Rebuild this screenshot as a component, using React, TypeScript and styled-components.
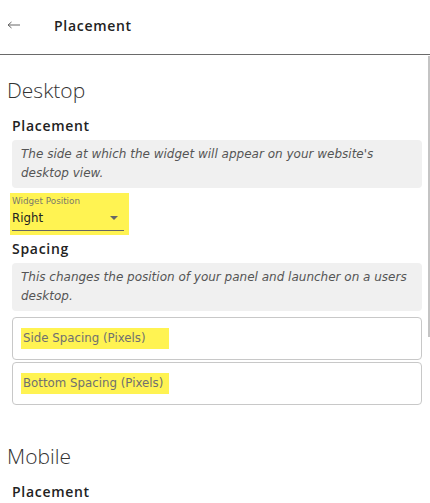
import React from "react";
import styled, { createGlobalStyle } from "styled-components";

const Global = createGlobalStyle`
  html, body { margin: 0; padding: 0; background: #fff; }
  body { font-family: "DejaVu Sans", "Open Sans", sans-serif; color: #333; }
  * { box-sizing: border-box; }
`;

const Page = styled.div`
  width: 430px;
  height: 503px;
  display: flex;
  flex-direction: column;
  overflow: hidden;
  background: #fff;
`;

const Header = styled.header`
  height: 55px;
  flex: none;
  display: flex;
  align-items: center;
  padding: 0 0 4px 7px;
  border-bottom: 1px solid #6a6a6a;
`;

const BackButton = styled.button`
  border: 0;
  background: none;
  padding: 0;
  width: 14px;
  height: 14px;
  display: flex;
  color: #666;
  margin-right: 33px;
`;

const HeaderTitle = styled.h1`
  margin: 0;
  font-family: "Open Sans", sans-serif;
  font-size: 14px;
  font-weight: 600;
  color: #222;
  letter-spacing: 0.7px;
`;

const Body = styled.div`
  position: relative;
  flex: 1;
  min-height: 0;
  display: flex;
  flex-direction: column;
`;

const Scroller = styled.main`
  flex: 1;
  overflow-y: auto;
  scrollbar-width: none;
  padding: 21px 8px 0 0;
  &::-webkit-scrollbar { display: none; }
`;

const ScrollThumb = styled.div`
  position: absolute;
  top: 1px;
  right: 0;
  width: 2.5px;
  height: 281px;
  background: #c4c4c4;
`;

const Section = styled.section<{ $gap?: number }>`
  display: flex;
  flex-direction: column;
  margin-bottom: ${(p) => p.$gap ?? 0}px;
`;

const SectionTitle = styled.h2`
  margin: 0 0 11px 7px;
  font-family: "Open Sans", sans-serif;
  font-size: 21px;
  font-weight: 300;
  color: #333;
  line-height: 28px;
`;

const Group = styled.div`
  display: flex;
  flex-direction: column;
  padding-left: 12px;
`;

const GroupTitle = styled.h3<{ $top?: number }>`
  margin: ${(p) => p.$top ?? 0}px 0 4px;
  font-family: "Open Sans", sans-serif;
  font-size: 14px;
  font-weight: 600;
  color: #222;
  line-height: 21px;
  letter-spacing: 0.7px;
`;

const Note = styled.p`
  margin: 0;
  height: 48px;
  background: #f0f0f0;
  border-radius: 4px;
  padding: 5px 5px 5px 9px;
  font-size: 12px;
  font-style: italic;
  line-height: 19px;
  color: #555;
`;

const Highlight = styled.span`
  background: #fff352;
`;

const SelectWrap = styled(Highlight)`
  display: block;
  width: 119px;
  margin: 5px 0 0 -2px;
  padding: 3px 5px 4px 2px;
`;

const SelectLabel = styled.span`
  display: block;
  font-size: 8.8px;
  line-height: 10px;
  color: #7a7a6a;
`;

const SelectRow = styled.span`
  display: flex;
  align-items: center;
  justify-content: space-between;
  height: 25px;
  padding-right: 6px;
  border-bottom: 1px solid #666;
  font-size: 11.8px;
  color: #222;
`;

const Caret = styled.span`
  width: 0;
  height: 0;
  border-left: 4px solid transparent;
  border-right: 4px solid transparent;
  border-top: 4px solid #666;
`;

const Field = styled.div<{ $top: number }>`
  height: 43px;
  border: 1px solid #c8c8c8;
  border-radius: 4px;
  display: flex;
  align-items: center;
  padding-left: 8px;
  margin-top: ${(p) => p.$top}px;
`;

const FieldLabel = styled(Highlight)`
  display: block;
  width: 148px;
  font-size: 11.8px;
  color: #707070;
  padding: 0 0 0 2px;
  line-height: 21px;
`;

const BackArrow = () => (
  <svg width="14" height="14" viewBox="0 0 14 14" fill="none" stroke="currentColor" strokeWidth="1">
    <path d="M1 7h12M1 7l3.5-3M1 7l3.5 3" />
  </svg>
);

const PlacementBlock = ({ view }: { view: string }) => (
  <>
    <Group>
      <GroupTitle>Placement</GroupTitle>
      <Note>The side at which the widget will appear on your website's {view} view.</Note>
      <SelectWrap>
        <SelectLabel>Widget Position</SelectLabel>
        <SelectRow>
          Right
          <Caret />
        </SelectRow>
      </SelectWrap>
    </Group>
    <Group>
      <GroupTitle $top={3}>Spacing</GroupTitle>
      <Note>This changes the position of your panel and launcher on a users {view}.</Note>
      <Field $top={6}><FieldLabel>Side Spacing (Pixels)</FieldLabel></Field>
      <Field $top={2}><FieldLabel>Bottom Spacing (Pixels)</FieldLabel></Field>
    </Group>
  </>
);

export default function App() {
  return (
    <Page>
      <Global />
      <Header>
        <BackButton aria-label="Back"><BackArrow /></BackButton>
        <HeaderTitle>Placement</HeaderTitle>
      </Header>
      <Body>
        <Scroller>
          <Section $gap={37}>
            <SectionTitle>Desktop</SectionTitle>
            <PlacementBlock view="desktop" />
          </Section>
          <Section>
            <SectionTitle>Mobile</SectionTitle>
            <PlacementBlock view="mobile" />
          </Section>
        </Scroller>
        <ScrollThumb />
      </Body>
    </Page>
  );
}
